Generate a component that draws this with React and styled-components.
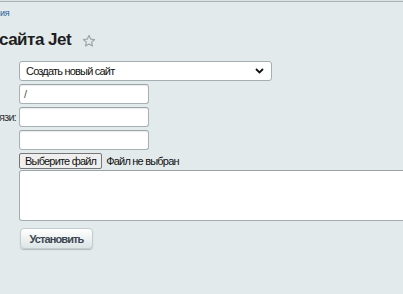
import React from 'react';
import styled, { createGlobalStyle } from 'styled-components';

const GlobalStyle = createGlobalStyle`
  html, body {
    margin: 0;
    padding: 0;
    background: #e3eaec;
    overflow: hidden;
  }
  body {
    font-family: "Liberation Sans", Arial, sans-serif;
    color: #000;
  }
`;

const Page = styled.div`
  width: 403px;
  height: 294px;
  overflow: hidden;
  border-top: 1px solid #d9e1e3;
  box-sizing: border-box;
`;

const TopLine = styled.div`
  height: 1px;
  background: #a9b4b8;
`;

const Breadcrumb = styled.a`
  display: block;
  margin-top: 5px;
  font-size: 9px;
  letter-spacing: -0.3px;
  color: #2a5f9e;
  text-decoration: none;
  line-height: 12px;
`;

const TitleRow = styled.div`
  display: flex;
  align-items: center;
  gap: 11px;
  margin-top: 11px;
  height: 20px;
`;

const Title = styled.h1`
  margin: 0 0 0 -1px;
  font-size: 17px;
  font-weight: bold;
  letter-spacing: -0.5px;
  color: #1e1e1e;
  line-height: 20px;
`;

const Star = styled.svg`
  width: 14px;
  height: 14px;
  margin-top: 1px;
`;

const Form = styled.div`
  display: grid;
  grid-template-columns: 19px 1fr;
  row-gap: 3px;
  margin-top: 11px;
  align-items: center;
  font-size: 11px;
  letter-spacing: -0.8px;
`;

const Label = styled.div`
  display: flex;
  justify-content: flex-end;
  padding-right: 3px;
  color: #333;
  white-space: nowrap;
  overflow: hidden;
`;

const Select = styled.div`
  width: 253px;
  height: 20px;
  box-sizing: border-box;
  background: #fff;
  border: 1px solid #a2aeb2;
  border-radius: 3px;
  display: flex;
  align-items: center;
  justify-content: space-between;
  padding: 0 7px 0 6px;
  color: #111;
`;

const Input = styled.div`
  width: 130px;
  height: 20px;
  box-sizing: border-box;
  background: #fff;
  border: 1px solid #a7b2b6;
  border-top-color: #9aa5a9;
  border-radius: 3px;
  box-shadow: inset 0 1px 1px rgba(0, 0, 0, 0.08);
  padding: 0 4px;
  line-height: 18px;
  color: #555;
`;

const FileRow = styled.div`
  display: flex;
  align-items: center;
  gap: 4px;
  color: #111;
`;

const FileButton = styled.div`
  height: 16px;
  box-sizing: border-box;
  padding: 0 5px;
  border: 1px solid #767676;
  border-radius: 2px;
  background: #efefef;
  line-height: 14px;
  color: #111;
`;

const TextArea = styled.div`
  height: 51px;
  margin: -2px -20px 0 0;
  box-sizing: border-box;
  background: #fff;
  border: 1px solid #a3adb1;
  border-top-color: #9ba5a9;
  border-radius: 3px;
`;

const SubmitButton = styled.button`
  margin: 7px 0 0 20px;
  width: 73px;
  height: 21px;
  padding: 0;
  font-family: "Liberation Sans", Arial, sans-serif;
  font-size: 11px;
  font-weight: bold;
  letter-spacing: -0.9px;
  color: #3b4650;
  background: linear-gradient(#ffffff, #dde4e6);
  border: 1px solid #c3ccd0;
  border-radius: 4px;
  box-shadow: 0 1px 1px rgba(0, 0, 0, 0.2);
`;

export default function App() {
  return (
    <>
      <GlobalStyle />
      <Page>
        <TopLine />
        <Breadcrumb href="#">ия</Breadcrumb>
        <TitleRow>
          <Title>сайта Jet</Title>
          <Star viewBox="0 0 24 24" fill="none" stroke="#9aa3a8" strokeWidth="2" strokeLinejoin="round">
            <path d="M12 2.5l2.9 6.2 6.6.7-5 4.5 1.4 6.6L12 17.1l-5.9 3.4 1.4-6.6-5-4.5 6.6-.7z" />
          </Star>
        </TitleRow>
        <Form>
          <Label />
          <Select>
            <span>Создать новый сайт</span>
            <svg width="9" height="6" viewBox="0 0 9 6">
              <path d="M1 1l3.5 3.5L8 1" fill="none" stroke="#111" strokeWidth="1.8" />
            </svg>
          </Select>
          <Label />
          <Input>/</Input>
          <Label>язи:</Label>
          <Input />
          <Label />
          <Input />
          <Label />
          <FileRow>
            <FileButton>Выберите файл</FileButton>
            <span>Файл не выбран</span>
          </FileRow>
          <Label />
          <TextArea />
        </Form>
        <SubmitButton>Установить</SubmitButton>
      </Page>
    </>
  );
}
